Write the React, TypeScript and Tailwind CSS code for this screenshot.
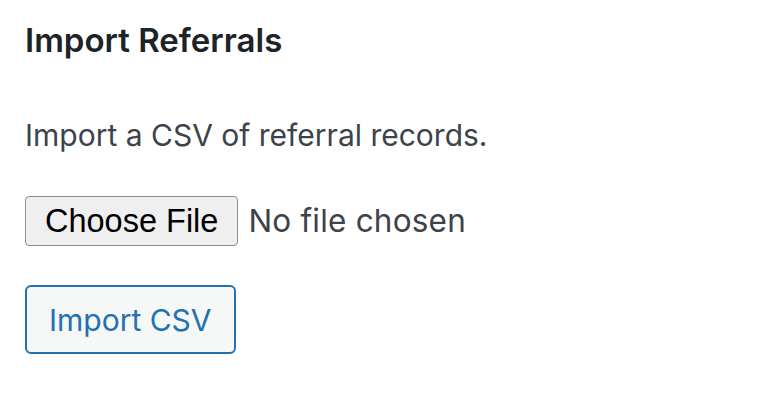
import React from "react";

export default function App() {
  return (
    <div
      className="min-h-[403px] w-full bg-white pl-[25px] pt-[20px]"
      style={{ fontFamily: "Inter, 'Noto Sans', sans-serif" }}
    >
      <h3 className="text-[33px] font-semibold leading-[40px] text-[#1d2327]">
        Import Referrals
      </h3>
      <p className="mt-[55px] text-[30px] leading-[40px] text-[#3c434a]">
        Import a CSV of referral records.
      </p>
      <div className="mt-[41px] flex items-center">
        <button
          type="button"
          className="flex h-[50px] items-center rounded-[4px] border border-[#8c8c8c] bg-[#efefef] px-[19px] text-[32.5px] leading-none text-black"
          style={{ fontFamily: "'Liberation Sans', Arial, sans-serif" }}
        >
          Choose File
        </button>
        <span className="ml-[10px] text-[31.5px] leading-[40px] tracking-[0.2px] text-[#3c434a]">
          No file chosen
        </span>
      </div>
      <button
        type="button"
        className="mt-[39px] flex h-[69px] items-center rounded-[6px] border-2 border-[#2271b1] bg-[#f6f7f7] px-[22px] text-[30px] leading-none text-[#2271b1]"
      >
        Import CSV
      </button>
    </div>
  );
}
